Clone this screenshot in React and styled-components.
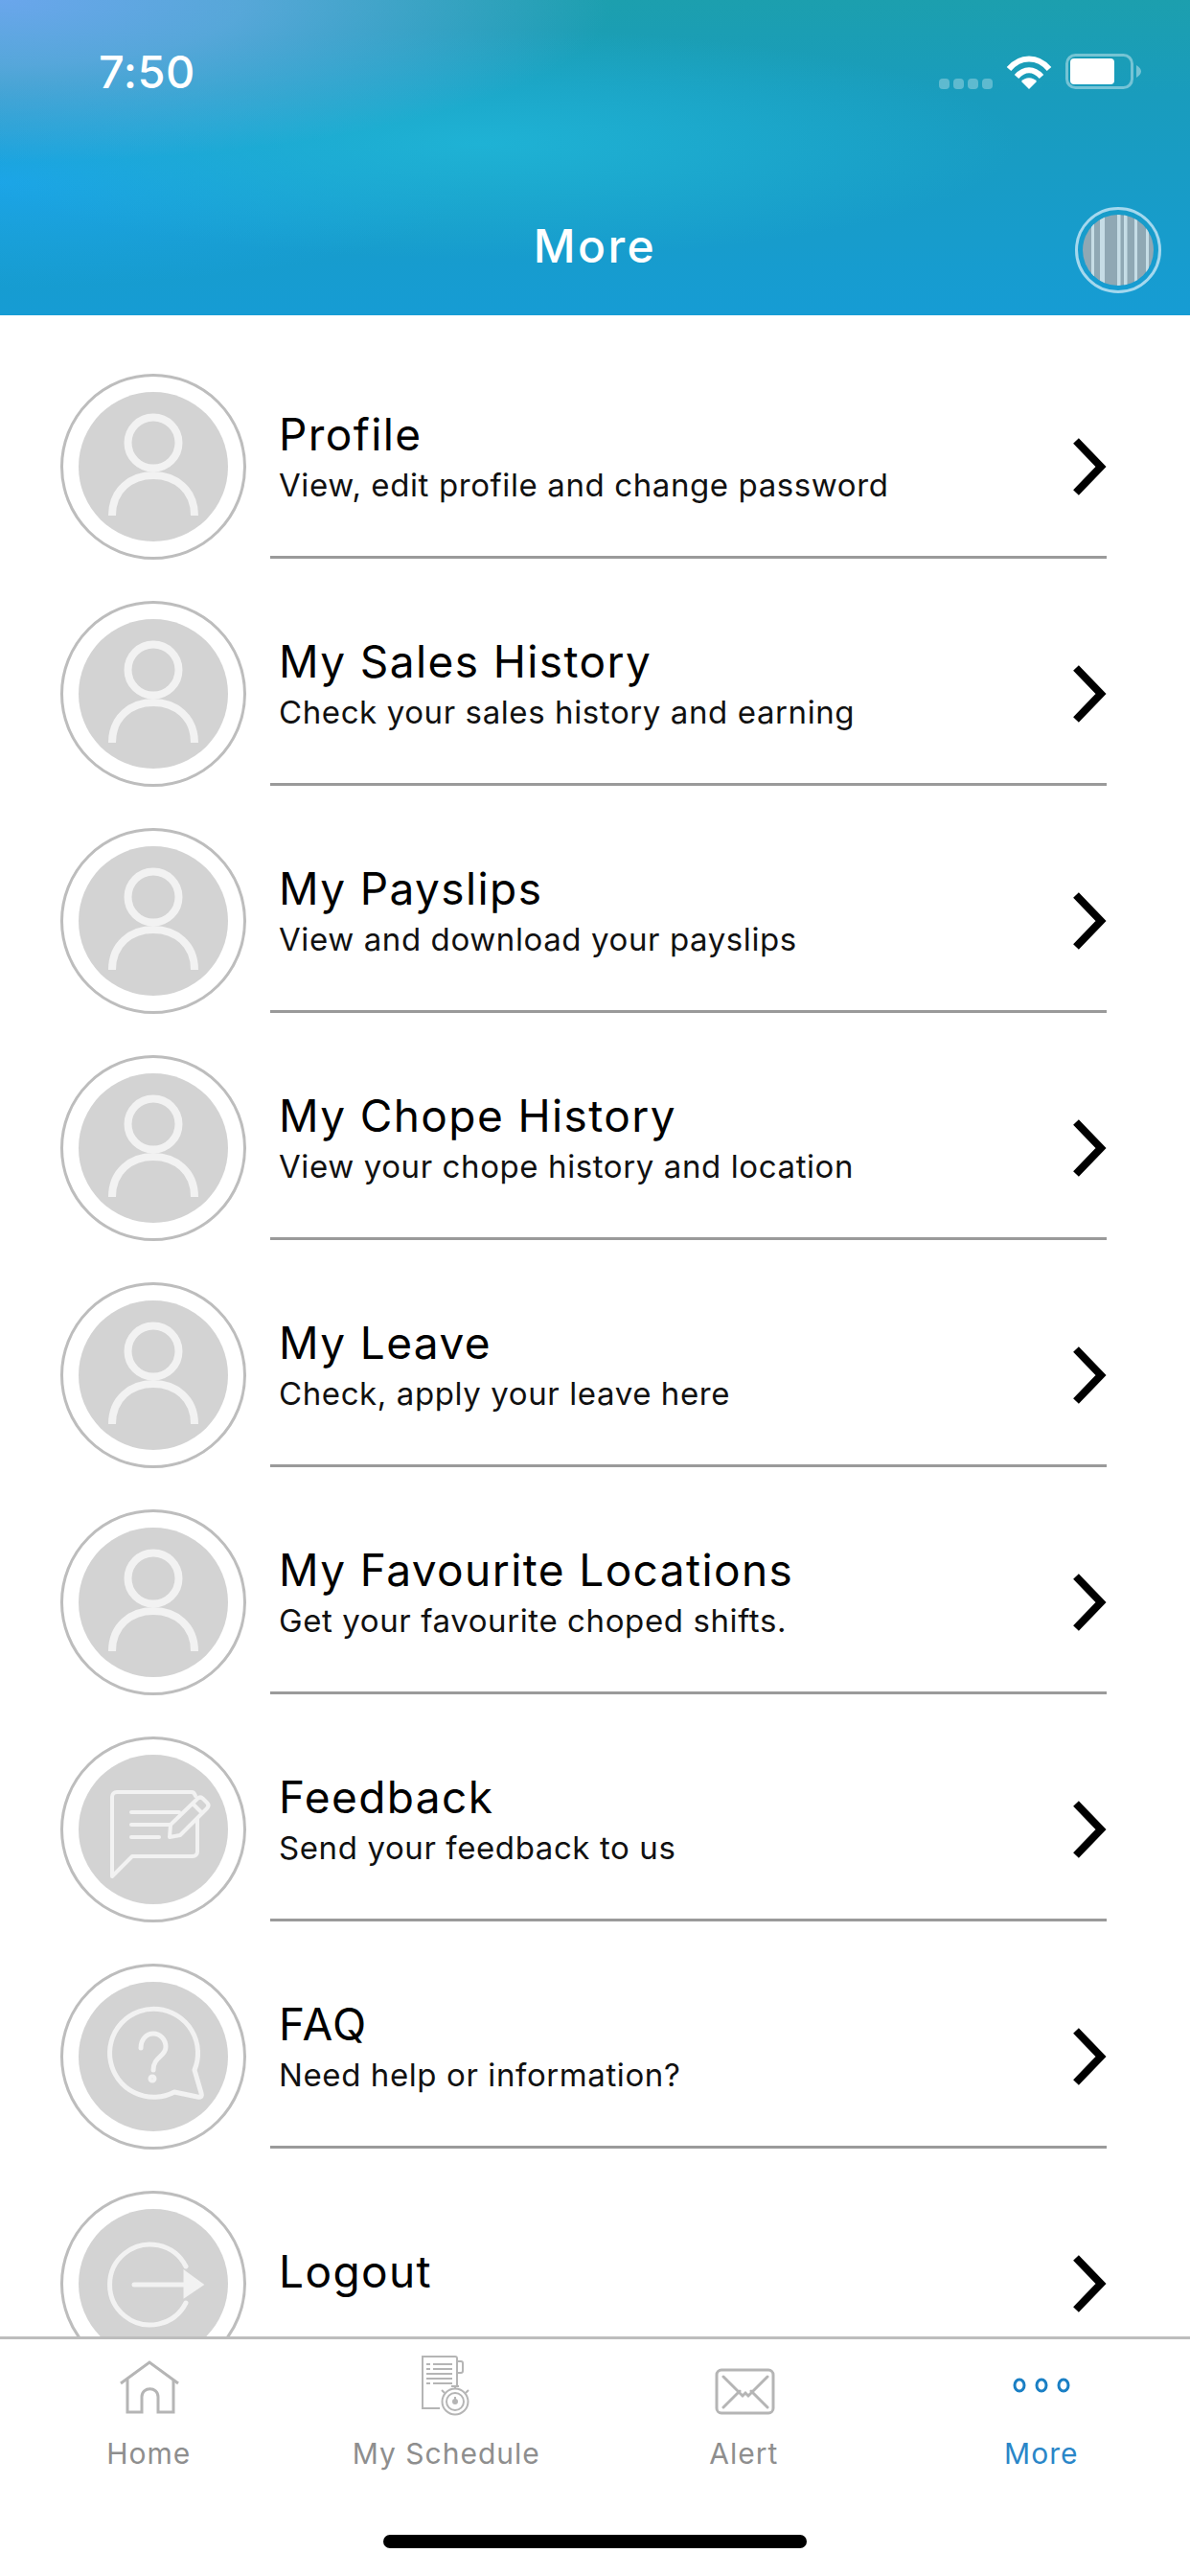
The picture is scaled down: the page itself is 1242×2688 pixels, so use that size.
import React from 'react'
import styled, { createGlobalStyle } from 'styled-components'

const GlobalStyle = createGlobalStyle`
  html, body {
    margin: 0;
    padding: 0;
    background: #fff;
    font-family: Inter, "Noto Sans", sans-serif;
  }
`

const PersonIcon = () => (
  <g strokeWidth="8">
    <circle cx="78" cy="53" r="26.5" />
    <path d="M35 129 C35 102 55 87 78 87 C101 87 121 102 121 129" />
  </g>
)

const FeedbackIcon = () => (
  <g strokeWidth="4">
    <path d="M122 43 C121 40 120 39 118 39 H40 C37 39 35 41 35 44 V127 L56 106 H119 C122 106 124 104 124 101 V67" strokeLinecap="round" strokeLinejoin="round" />
    <path d="M55 60 H105 M55 73 H95 M55 86 H84" strokeLinecap="round" />
    <path d="M96 73 L124 46 C126 44 128 44 130 46 L134 50 C136 52 136 54 134 56 L106 84 L95 86 Z M119 51 L129 61" strokeLinejoin="round" />
  </g>
)

const FaqIcon = () => (
  <g strokeWidth="5">
    <path d="M100 115 A46 46 0 1 1 121 92 L128 116 C129 120 127 121 124 120 Z" strokeLinejoin="round" />
    <path d="M65 69 C65 60 71 54 78 54 C85 54 91 60 91 68 C91 78 78 78 78 92" strokeLinecap="round" />
    <circle cx="77" cy="101" r="2" />
  </g>
)

const LogoutIcon = () => (
  <g strokeWidth="5">
    <path d="M112 60 A42 42 0 1 0 112 98" strokeLinecap="round" />
    <path d="M58 79 H113" strokeLinecap="round" />
    <path d="M112 68 L127 79 L112 89 Z" fill="#f2f2f2" />
  </g>
)

const items = [
  { title: 'Profile', sub: 'View, edit profile and change password', Icon: PersonIcon },
  { title: 'My Sales History', sub: 'Check your sales history and earning', Icon: PersonIcon },
  { title: 'My Payslips', sub: 'View and download your payslips', Icon: PersonIcon },
  { title: 'My Chope History', sub: 'View your chope history and location', Icon: PersonIcon },
  { title: 'My Leave', sub: 'Check, apply your leave here', Icon: PersonIcon },
  { title: 'My Favourite Locations', sub: 'Get your favourite choped shifts.', Icon: PersonIcon },
  { title: 'Feedback', sub: 'Send your feedback to us', Icon: FeedbackIcon },
  { title: 'FAQ', sub: 'Need help or information?', Icon: FaqIcon },
  { title: 'Logout', Icon: LogoutIcon },
]

const App = () => {
  return (
    <>
      <GlobalStyle />
      <Page>
        <Header>
          <StatusBar>
            <Time>7:50</Time>
            <StatusIcons>
              <svg width="56" height="11" viewBox="0 0 56 11" fill="rgba(255,255,255,.3)">
                <rect x="0" width="11" height="11" rx="4" />
                <rect x="15" width="11" height="11" rx="4" />
                <rect x="30" width="11" height="11" rx="4" />
                <rect x="45" width="11" height="11" rx="4" />
              </svg>
              <svg width="48" height="36" viewBox="0 0 48 36" fill="none" stroke="#fff" strokeWidth="6">
                <path d="M3 15 C15 1 33 1 45 15" />
                <path d="M11 23 C19 14 29 14 37 23" />
                <path d="M16 28 C20 23 28 23 32 28 L24 36 Z" fill="#fff" stroke="none" />
              </svg>
              <svg width="79" height="37" viewBox="0 0 79 37">
                <rect x="1.5" y="1.5" width="68" height="34" rx="9" fill="none" stroke="rgba(255,255,255,.4)" strokeWidth="3" />
                <rect x="5" y="5" width="46" height="27" rx="4" fill="#fff" />
                <path d="M74 12 C77 14 79 16 79 18.5 C79 21 77 23 74 25 Z" fill="rgba(255,255,255,.4)" />
              </svg>
            </StatusIcons>
          </StatusBar>
          <NavBar>
            <span />
            <NavTitle>More</NavTitle>
            <AvatarRing>
              <svg width="74" height="74" viewBox="0 0 74 74">
                <clipPath id="avatar-clip">
                  <circle cx="37" cy="37" r="37" />
                </clipPath>
                <g clipPath="url(#avatar-clip)">
                  <rect width="74" height="74" fill="#8fa8b4" />
                  <g fill="#c6dde6">
                    <rect x="9" width="3" height="74" />
                    <rect x="18" width="5" height="74" />
                    <rect x="36" width="3.5" height="74" />
                    <rect x="43" width="3.5" height="74" />
                    <rect x="54" width="3" height="74" />
                    <rect x="66" width="3" height="74" />
                  </g>
                </g>
              </svg>
            </AvatarRing>
          </NavBar>
        </Header>

        <List>
          {items.map(({ title, sub, Icon }) => (
            <Row key={title}>
              <Badge>
                <Disc>
                  <svg width="156" height="156" viewBox="0 0 156 156" fill="none" stroke="#f2f2f2" strokeWidth="7">
                    <Icon />
                  </svg>
                </Disc>
              </Badge>
              <RowBody>
                <RowText $solo={!sub}>
                  <RowTitle>{title}</RowTitle>
                  {sub && <RowSub>{sub}</RowSub>}
                </RowText>
                <svg width="36" height="60" viewBox="0 0 36 60" fill="none" stroke="#000" strokeWidth="8">
                  <path d="M4 3 L30 30 L4 57" />
                </svg>
              </RowBody>
            </Row>
          ))}
        </List>

        <TabBar>
          <Tabs>
            <Tab>
              <svg width="70" height="66" viewBox="0 0 70 66" fill="none" stroke="#b5b5b5" strokeWidth="3">
                <path d="M6 31 L36 9 L66 31" />
                <path d="M13 27 V61 H28 V45 C28 34 45 34 45 45 V61 H61 V28" />
              </svg>
              <TabLabel>Home</TabLabel>
            </Tab>
            <Tab>
              <svg width="70" height="66" viewBox="0 0 70 66" fill="none" stroke="#b5b5b5" strokeWidth="2">
                <path d="M46 33 V5 C46 3 45 3 44 3 H10 V57 H28" />
                <path d="M46 8 H50 C52 8 52 9 52 10 V18 C52 20 51 20 50 20 H46" />
                <path d="M14 11 H18 M21 11 H41 M14 16 H18 M21 16 H41 M14 21 H41 M14 26 H41 M14 31 H18 M21 31 H41" strokeWidth="1.8" />
                <circle cx="44" cy="50" r="13.5" />
                <circle cx="44" cy="50" r="9" />
                <circle cx="44" cy="50" r="2" fill="#b5b5b5" />
                <path d="M44 45 V50 M40 34 H48 M44 34 V37 M30 38 L33 41 M58 38 L55 41" />
              </svg>
              <TabLabel>My Schedule</TabLabel>
            </Tab>
            <Tab>
              <svg width="70" height="66" viewBox="0 0 70 66" fill="none" stroke="#b5b5b5" strokeWidth="3">
                <rect x="7" y="17" width="59" height="45" rx="5" />
                <path d="M14 24 L34 44 L37 41 L40 44 L60 24 M14 56 L31 39 M60 56 L43 39" strokeLinecap="round" />
              </svg>
              <TabLabel>Alert</TabLabel>
            </Tab>
            <Tab>
              <svg width="70" height="66" viewBox="0 0 70 66" fill="none" stroke="#1a7fc4" strokeWidth="3">
                <ellipse cx="12" cy="33" rx="5" ry="6" />
                <ellipse cx="35" cy="33" rx="5" ry="6" />
                <ellipse cx="58" cy="33" rx="5" ry="6" />
              </svg>
              <TabLabel $active>More</TabLabel>
            </Tab>
          </Tabs>
          <HomeIndicator />
        </TabBar>
      </Page>
    </>
  )
}

export default App

const Page = styled.div`
  width: 1242px;
  height: 2688px;
  display: flex;
  flex-direction: column;
  overflow: hidden;
  background: #fff;
`

const Header = styled.header`
  height: 329px;
  flex-shrink: 0;
  display: flex;
  flex-direction: column;
  background:
    radial-gradient(ellipse 640px 170px at 0 0, #6aa6ec 0%, rgba(106, 170, 230, 0.75) 40%, rgba(106, 170, 230, 0) 100%),
    radial-gradient(ellipse 560px 120px at 500px 150px, rgba(32, 182, 216, 0.85), rgba(32, 182, 216, 0)),
    radial-gradient(ellipse 500px 110px at 0 190px, rgba(28, 165, 235, 0.9), rgba(28, 165, 235, 0)),
    linear-gradient(180deg, #1c9fae 0%, #199cbd 30%, #169cd4 100%);
`

const StatusBar = styled.div`
  height: 193px;
  box-sizing: border-box;
  padding: 56px 51px 0 103px;
  display: flex;
  justify-content: space-between;
  align-items: flex-start;
`

const Time = styled.div`
  font-size: 47px;
  line-height: 37px;
  font-weight: 500;
  color: #fff;
  letter-spacing: 0.5px;
`

const StatusIcons = styled.div`
  display: flex;
  align-items: flex-end;
  gap: 14px;

  svg {
    display: block;
  }
`

const NavBar = styled.div`
  height: 136px;
  padding-right: 30px;
  display: grid;
  grid-template-columns: 1fr auto 1fr;
  align-items: center;
`

const NavTitle = styled.div`
  font-size: 48px;
  font-weight: 500;
  color: #fff;
  letter-spacing: 2.5px;
  padding-left: 30px;
  padding-bottom: 10px;
`

const AvatarRing = styled.div`
  justify-self: end;
  width: 90px;
  height: 90px;
  box-sizing: border-box;
  border: 3px solid #a4d8ee;
  border-radius: 50%;
  display: flex;
  align-items: center;
  justify-content: center;
`

const List = styled.div`
  flex: 1;
  min-height: 0;
  overflow: hidden;
  padding-top: 18px;
`

const Row = styled.div`
  height: 237px;
  padding: 0 87px 0 63px;
  display: flex;
  align-items: flex-end;
`

const Badge = styled.div`
  width: 194px;
  height: 194px;
  box-sizing: border-box;
  flex-shrink: 0;
  border: 3px solid #bdbdbd;
  border-radius: 50%;
  display: flex;
  align-items: center;
  justify-content: center;
`

const Disc = styled.div`
  width: 156px;
  height: 156px;
  border-radius: 50%;
  background: #d3d3d3;

  svg {
    display: block;
  }
`

const RowBody = styled.div`
  flex: 1;
  height: 190px;
  margin-left: 25px;
  margin-bottom: 1px;
  box-sizing: border-box;
  padding-left: 9px;
  border-bottom: 3px solid #9a9a9a;
  display: flex;
  align-items: center;
  justify-content: space-between;
`

const RowText = styled.div`
  display: flex;
  flex-direction: column;
  padding-bottom: ${(p) => (p.$solo ? '26px' : '19px')};
`

const RowTitle = styled.div`
  font-size: 46px;
  line-height: 52px;
  color: #000;
  letter-spacing: 1.4px;
`

const RowSub = styled.div`
  font-size: 33px;
  line-height: 42px;
  margin-top: 6px;
  color: #111;
  letter-spacing: 0.6px;
`

const TabBar = styled.nav`
  height: 250px;
  flex-shrink: 0;
  box-sizing: border-box;
  border-top: 3px solid #bdbdbd;
  background: #fff;
  padding-top: 15px;
  display: flex;
  flex-direction: column;
  align-items: center;
`

const Tabs = styled.div`
  width: 100%;
  display: grid;
  grid-template-columns: repeat(4, 1fr);
`

const Tab = styled.div`
  display: flex;
  flex-direction: column;
  align-items: center;
  gap: 21px;

  svg {
    display: block;
  }
`

const TabLabel = styled.div`
  font-size: 30px;
  line-height: 34px;
  letter-spacing: 1px;
  color: ${(p) => (p.$active ? '#2a86c8' : '#8e8e8e')};
`

const HomeIndicator = styled.div`
  width: 442px;
  height: 14px;
  margin-top: 68px;
  border-radius: 7px;
  background: #000;
`
